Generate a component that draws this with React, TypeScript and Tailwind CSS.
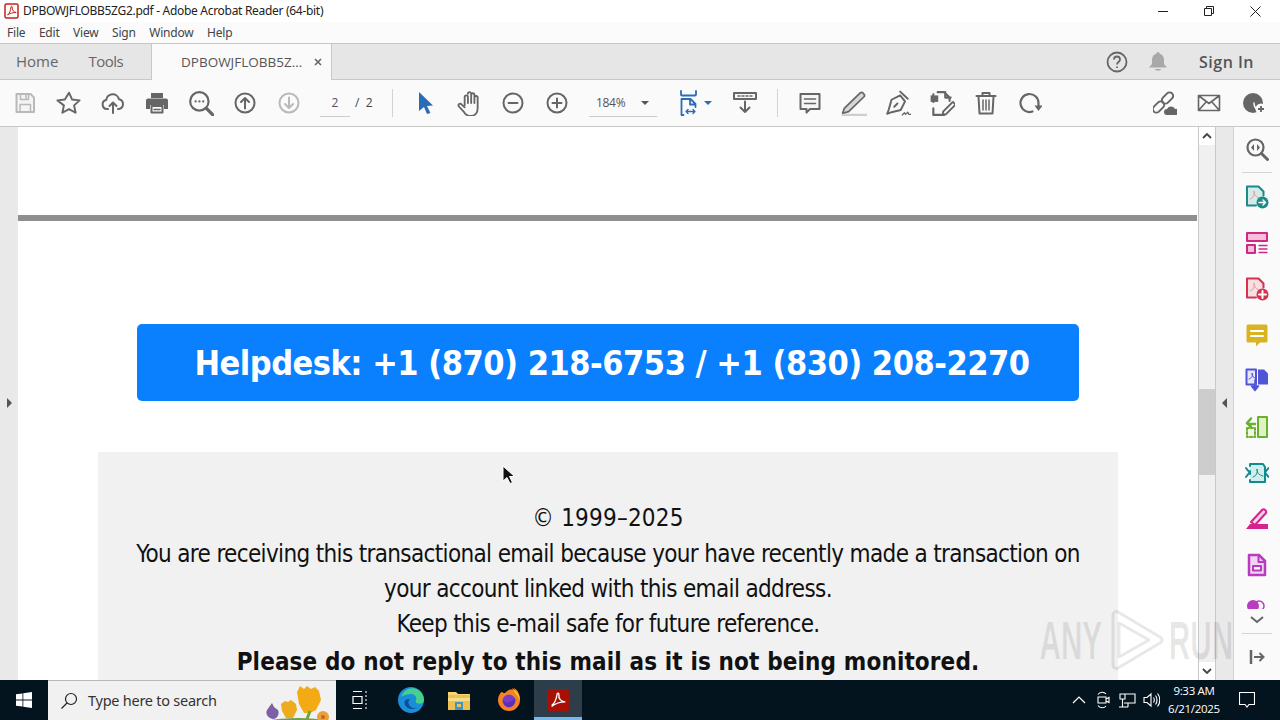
import type { ReactNode } from 'react';

const ui = 'font-["Open_Sans",sans-serif]';
const docFont = 'font-["DejaVu_Sans",sans-serif] font-stretch-condensed';

function Ico({ w = 24, h = 24, vb = '0 0 24 24', children }: { w?: number; h?: number; vb?: string; children: ReactNode }) {
  return (
    <svg width={w} height={h} viewBox={vb} fill="none" strokeLinecap="round" strokeLinejoin="round" className="shrink-0">
      {children}
    </svg>
  );
}

const G = '#666666';

function ToolBtn({ children, className = 'w-[44px]' }: { children: ReactNode; className?: string }) {
  return <div className={`flex h-full shrink-0 items-center justify-center ${className}`}>{children}</div>;
}

function CircleArrow({ color, down }: { color: string; down?: boolean }) {
  return (
    <Ico>
      <circle cx="12" cy="12" r="9.5" stroke={color} strokeWidth="2" />
      {down ? (
        <path d="M12 6.5v10M8 13l4 4 4-4" stroke={color} strokeWidth="2" />
      ) : (
        <path d="M12 17.5v-10M8 11l4-4 4 4" stroke={color} strokeWidth="2" />
      )}
    </Ico>
  );
}

function Toolbar() {
  return (
    <div className="flex h-[47px] shrink-0 items-center border-b border-[#c8c8c8] bg-[#fafafa] pl-[3px] pr-[5px]">
      <ToolBtn>
        <Ico>
          <path d="M3.5 3h14L21 6.5V21H3.5z" fill="#f4f4f4" stroke="#b9b9b9" strokeWidth="2" />
          <path d="M7.5 3.5v5h8v-5M7 20.500v-7h10.500v7M13 4.500v3" stroke="#b9b9b9" strokeWidth="1.500" />
        </Ico>
      </ToolBtn>
      <ToolBtn>
        <Ico w={26} h={26}>
          <path d="M12 2.500l2.900 6.300 6.900.8-5.100 4.600 1.400 6.800-6.100-3.400-6.100 3.400 1.400-6.800L1.300 9.600l6.900-.8z" stroke={G} strokeWidth="1.800" />
        </Ico>
      </ToolBtn>
      <ToolBtn>
        <Ico>
          <path d="M7 18H6a4.500 4.500 0 0 1-.8-8.900A6.500 6.500 0 0 1 18 8.200 5 5 0 0 1 18 18h-1" stroke={G} strokeWidth="2" />
          <path d="M12 22V11.500M8.500 15l3.500-3.500 3.500 3.500" stroke={G} strokeWidth="2" />
        </Ico>
      </ToolBtn>
      <ToolBtn className="w-[43px]">
        <Ico>
          <path d="M6 2h12v5H6z" fill={G} />
          <path d="M1 9.500a2 2 0 0 1 2-2h18a2 2 0 0 1 2 2V18h-4v-4H5v4H1z" fill={G} />
          <path d="M6.500 15h11v6.500h-11z" fill="#fafafa" stroke={G} strokeWidth="2" />
          <path d="M9 18.500h6" stroke={G} strokeWidth="1.500" />
        </Ico>
      </ToolBtn>
      <ToolBtn className="w-[45px]">
        <Ico w={26} h={26}>
          <circle cx="10.500" cy="10.500" r="8.500" stroke={G} strokeWidth="2" />
          <path d="M17 17l7 7" stroke={G} strokeWidth="3" />
          <path d="M7 10.500h.1M10.500 10.500h.1M14 10.500h.1" stroke={G} strokeWidth="2" />
        </Ico>
      </ToolBtn>
      <ToolBtn>
        <CircleArrow color={G} />
      </ToolBtn>
      <ToolBtn>
        <CircleArrow color="#b9b9b9" down />
      </ToolBtn>
      <div className="flex h-full w-[81px] shrink-0 items-center pl-[9px]">
        <div className="flex h-[28px] w-[30px] items-center justify-center border-b border-[#cccccc] text-[12px] text-[#555]">2</div>
        <span className="ml-[5px] whitespace-nowrap text-[12px] text-[#444]">/&nbsp;&nbsp;2</span>
      </div>
      <div className="mr-[10px] h-[28px] w-px bg-[#d4d4d4]" />
      <ToolBtn>
        <svg width="16" height="22" viewBox="0 0 16 22" className="ml-[2px]">
          <path d="M1 0l14 13.500-6 .5 3.500 7-3.500 1-3-7-5 4z" fill="#2a6cb5" />
        </svg>
      </ToolBtn>
      <ToolBtn>
        <Ico w={26} h={26}>
          <path d="M8 14V6.500a1.500 1.500 0 0 1 3 0V12m0-8.500a1.500 1.500 0 0 1 3 0V12m0-7.500a1.500 1.500 0 0 1 3 0V12m0-5a1.500 1.500 0 0 1 3 0v10c0 4-2.500 7-6.500 7-3 0-4.500-1-6-3.500L2.500 15a1.500 1.500 0 0 1 2.500-1.700L8 16" stroke={G} strokeWidth="1.700" />
        </Ico>
      </ToolBtn>
      <ToolBtn>
        <Ico>
          <circle cx="12" cy="12" r="9.500" stroke={G} strokeWidth="2" />
          <path d="M7.500 12h9" stroke={G} strokeWidth="2" />
        </Ico>
      </ToolBtn>
      <ToolBtn>
        <Ico>
          <circle cx="12" cy="12" r="9.500" stroke={G} strokeWidth="2" />
          <path d="M7.500 12h9M12 7.500v9" stroke={G} strokeWidth="2" />
        </Ico>
      </ToolBtn>
      <div className="ml-[10px] flex h-[28px] w-[68px] shrink-0 items-center border-b border-[#cccccc] pl-[7px]">
        <span className="text-[12px] tracking-[-0.3px] text-[#555]">184%</span>
        <span className="ml-[16px] h-0 w-0 border-x-[4px] border-t-[4px] border-x-transparent border-t-[#555]" />
      </div>
      <ToolBtn className="ml-[14px] w-[50px]">
        <Ico w={24} h={26} vb="0 0 24 26">
          <path d="M1 1v3.500a1 1 0 0 0 1 1h13a1 1 0 0 0 1-1V1" stroke="#2a6cb5" strokeWidth="1.800" />
          <path d="M1.500 25V9h9l5 5v3M1.500 25h2M10 9v5.500h5.500" stroke="#2a6cb5" strokeWidth="1.800" />
          <path d="M6 21.500h9M6 21.500l2-2M6 21.500l2 2M15 21.500l-2-2M15 21.500l-2 2" stroke="#2a6cb5" strokeWidth="1.300" />
        </Ico>
        <span className="h-0 w-0 border-x-[4px] border-t-[4px] border-x-transparent border-t-[#2a6cb5]" />
      </ToolBtn>
      <ToolBtn className="w-[48px]">
        <Ico>
          <path d="M1 2h22v6H1z" stroke={G} strokeWidth="2" />
          <path d="M5 5h2M9 5h2M13 5h2M17 5h2" stroke={G} strokeWidth="1.500" />
          <path d="M12 10.500V21M7.500 16.500L12 21l4.500-4.500" stroke={G} strokeWidth="2" />
        </Ico>
      </ToolBtn>
      <div className="ml-[8px] mr-[10px] h-[28px] w-px bg-[#d4d4d4]" />
      <ToolBtn>
        <Ico>
          <path d="M2.500 3h19v15H12l-3.500 3.500V18h-6z" fill="#f5f5f5" stroke={G} strokeWidth="2" />
          <path d="M6.500 8h11M6.500 12.500h11" stroke={G} strokeWidth="1.500" />
        </Ico>
      </ToolBtn>
      <ToolBtn>
        <Ico w={26} h={26}>
          <path d="M3 17L18 2.500c1.500-1 4.500 1.500 3.500 3.500L7 20l-5.500 1.500z" fill="#d6d6d6" stroke={G} strokeWidth="1.600" />
          <path d="M2 23.500h22" stroke="#cfcfcf" strokeWidth="3" />
        </Ico>
      </ToolBtn>
      <ToolBtn>
        <Ico w={26} h={26}>
          <path d="M14 5L6 9 3.500 18l-1.500 4 4-1.500 8.500-2 4-8z" stroke={G} strokeWidth="1.800" />
          <path d="M14 1.500l7 6.500M8.500 15.500l3-3" stroke={G} strokeWidth="1.800" />
          <path d="M16 23l2-2 1 1.500 2-2 1 2h2" stroke={G} strokeWidth="1.200" />
        </Ico>
      </ToolBtn>
      <ToolBtn>
        <Ico w={26} h={26}>
          <path d="M8 2h6l5 5v3M15 2v5h5M4 11V4M4 17v6h10" stroke={G} strokeWidth="2" />
          <path d="M1.500 5h7v6h-7z" fill={G} />
          <path d="M13 20l9-9 2.500 2.500-9 9H13z" stroke={G} strokeWidth="1.800" />
        </Ico>
      </ToolBtn>
      <ToolBtn>
        <Ico>
          <path d="M2.500 5h19M8.500 4.500V2h7v2.500M4.500 5.500l1 17h13l1-17" stroke={G} strokeWidth="2" />
          <path d="M9 9v10M12 9v10M15 9v10" stroke={G} strokeWidth="1.500" />
        </Ico>
      </ToolBtn>
      <ToolBtn>
        <Ico>
          <path d="M14.500 20.500A9 9 0 1 1 20.500 12v3" stroke={G} strokeWidth="2.200" />
          <path d="M16.500 14.500h8L20.500 20z" fill={G} />
        </Ico>
      </ToolBtn>
      <div className="flex-1" />
      <ToolBtn>
        <Ico>
          <rect x="-1" y="12.500" width="13" height="7" rx="3.500" transform="rotate(-45 5.500 16)" stroke={G} strokeWidth="2" />
          <rect x="8" y="3.500" width="13" height="7" rx="3.500" transform="rotate(-45 14.500 7)" stroke={G} strokeWidth="2" />
          <path d="M14 24a3 3 0 0 1 0-6 4.500 4.500 0 0 1 8 0 3 3 0 0 1 1.500 6z" fill={G} />
        </Ico>
      </ToolBtn>
      <ToolBtn>
        <Ico>
          <path d="M1.500 4.500h21v15h-21zM1.500 4.500l10.500 8 10.500-8M1.500 19.500l8-9M22.500 19.500l-8-9" stroke={G} strokeWidth="1.600" />
        </Ico>
      </ToolBtn>
      <ToolBtn>
        <Ico>
          <circle cx="12" cy="12" r="10" fill={G} />
          <circle cx="20" cy="18" r="5.500" fill="#fafafa" />
          <path d="M13 12c0 3 1 5 3.500 7" stroke="#fafafa" strokeWidth="1.500" />
          <path d="M20 15v6M17 18h6" stroke={G} strokeWidth="1.800" strokeLinecap="butt" />
        </Ico>
      </ToolBtn>
    </div>
  );
}

function Sidebar() {
  return (
    <div className="flex w-[46px] shrink-0 flex-col items-center bg-[#fafafa]">
      <div className="mt-[10px] flex h-[24px] items-center">
        <Ico>
          <circle cx="10.500" cy="10.500" r="8" stroke={G} strokeWidth="2.200" />
          <path d="M16.500 16.500l6 6" stroke={G} strokeWidth="3" />
          <path d="M9 7l-3 3.500L9 14zM12 7l3 3.500-3 3.500z" fill={G} />
        </Ico>
      </div>
      <div className="mt-[11px] h-px w-[30px] bg-[#d4d4d4]" />
      <div className="mt-[12px]">
        <Ico>
          <path d="M2 1.500h11.500l5 5V12H13v8.500H2z" fill="#d3ecea" />
          <path d="M11 20.500H2v-19h11.500l5 5v4" stroke="#1c8a87" strokeWidth="2" />
          <path d="M5 14c3-1 5-4 4-8 0 4 2 6 6 7" stroke="#e29a9a" strokeWidth="1" />
          <circle cx="17.500" cy="17.500" r="6" fill="#1c8a87" />
          <path d="M14 17.500h6M18 15l2.500 2.500-2.500 2.500" stroke="#fff" strokeWidth="1.500" />
        </Ico>
      </div>
      <div className="mt-[22px]">
        <Ico>
          <path d="M2 2h20v8H2z" fill="#f5bfdc" stroke="#cf2a83" strokeWidth="2" />
          <path d="M2 14h8v8H2z" fill="#f5bfdc" stroke="#cf2a83" strokeWidth="2" />
          <path d="M14 14.500h8M14 18h8M14 21.500h8" stroke="#cf2a83" strokeWidth="1.300" />
        </Ico>
      </div>
      <div className="mt-[22px]">
        <Ico>
          <path d="M2 1.500h11.500l5 5V12H13v8.500H2z" fill="#f8dfe2" />
          <path d="M11 20.500H2v-19h11.500l5 5v4" stroke="#d6304d" strokeWidth="2" />
          <path d="M5 14c3-1 5-4 4-8 0 4 2 6 6 7" stroke="#e29a9a" strokeWidth="1" />
          <circle cx="17.500" cy="17.500" r="6" fill="#d6304d" />
          <path d="M14 17.500h7M17.500 14v7" stroke="#fff" strokeWidth="2" />
        </Ico>
      </div>
      <div className="mt-[22px]">
        <Ico>
          <path d="M3 1.500h18a1.500 1.500 0 0 1 1.500 1.500v15a1.500 1.500 0 0 1-1.500 1.500h-6L11 23.500V19.500H3A1.500 1.500 0 0 1 1.500 18V3A1.500 1.500 0 0 1 3 1.500z" fill="#d9b321" />
          <path d="M6 8h12M6 13h12" stroke="#fff" strokeWidth="2" />
        </Ico>
      </div>
      <div className="mt-[21px]">
        <Ico>
          <path d="M1.500 1.500H11v15H1.500z" fill="#e6e6fa" stroke="#5054d8" strokeWidth="2" />
          <path d="M13 1.500h6l4 4v11H13z" fill="#5054d8" />
          <path d="M10 12v7M6.500 18h7l-3.500 4.500z" fill="#5054d8" stroke="#5054d8" strokeWidth="1.500" />
          <path d="M4 11c3-1 4-3 3-6 0 3 1 5 4 5" stroke="#5054d8" strokeWidth="1" />
        </Ico>
      </div>
      <div className="mt-[23px]">
        <Ico>
          <path d="M13 2h9v20h-9z" fill="#dff2c4" stroke="#68b02e" strokeWidth="2" />
          <path d="M2 13h8v9H2z" fill="#eef8df" stroke="#68b02e" strokeWidth="2" strokeDasharray="2 2" />
          <path d="M10 9H3M6 3.500L2 8l4 4" stroke="#68b02e" strokeWidth="2.500" />
        </Ico>
      </div>
      <div className="mt-[22px]">
        <Ico>
          <path d="M5 5V3h13l2 3v15H5v-2M5 13v-3" fill="#d3ecec" stroke="#0f8c8f" strokeWidth="2" />
          <path d="M1 7l3.500 4.500L1 16M23.500 7L20 11.500l3.500 4.500" stroke="#0f8c8f" strokeWidth="2" />
          <path d="M8 16c3-1 5-4 4-8 0 4 2 6 6 7" stroke="#0f8c8f" strokeWidth="1" />
        </Ico>
      </div>
      <div className="mt-[22px]">
        <Ico>
          <path d="M6 15L17.500 2.500c1.500-1 4.500 1 3.500 3.500L10 18z" fill="#f7cfe6" stroke="#d6228c" strokeWidth="2" />
          <path d="M1 22l4-5h18v5z" fill="#d6228c" />
        </Ico>
      </div>
      <div className="mt-[22px]">
        <Ico>
          <path d="M4 2h10l6 6v14H4z" fill="#f0d4f2" stroke="#b83cc0" strokeWidth="2.500" />
          <path d="M13.500 2v7H20" stroke="#b83cc0" strokeWidth="2" />
          <path d="M8 13h8v4.500H8z" fill="#fff" stroke="#b83cc0" strokeWidth="2" />
        </Ico>
      </div>
      <div className="mt-[23px] flex h-[9px] items-start overflow-hidden">
        <svg width="20" height="12" viewBox="0 0 20 12">
          <circle cx="6" cy="6" r="6" fill="#b83cc0" />
          <circle cx="12" cy="6" r="5" fill="none" stroke="#b83cc0" strokeWidth="1.500" />
        </svg>
      </div>
      <svg width="16" height="10" viewBox="0 0 16 10" className="mt-[6px]">
        <path d="M2 2l6 5 6-5" fill="none" stroke={G} strokeWidth="2" />
      </svg>
      <div className="mt-[8px] h-px w-[30px] bg-[#d4d4d4]" />
      <div className="mt-[15px]">
        <svg width="16" height="16" viewBox="0 0 16 16" fill="none">
          <path d="M2 1v14" stroke={G} strokeWidth="2.500" />
          <path d="M5 8h9M10.500 4l4 4-4 4" stroke={G} strokeWidth="2" />
        </svg>
      </div>
    </div>
  );
}

function Taskbar() {
  return (
    <div className={`flex h-[40px] shrink-0 items-center bg-[#04141f] text-white ${ui}`}>
      <div className="flex h-full w-[48px] items-center justify-center">
        <svg width="16" height="16" viewBox="0 0 16 16" fill="#fff">
          <path d="M0 2.300l6.500-.9v6.200H0zM7.300 1.300L16 0v7.600H7.300zM0 8.400h6.500v6.200L0 13.700zM7.300 8.400H16V16l-8.700-1.300z" />
        </svg>
      </div>
      <div className="relative flex h-full w-[288px] items-center overflow-hidden border-t border-[#b8b8b8] bg-[#f1f1f1] pl-[12px]">
        <svg width="18" height="18" viewBox="0 0 18 18" fill="none" stroke="#222" strokeWidth="1.200">
          <circle cx="11" cy="7" r="5.500" />
          <path d="M7 11l-5.500 5.500" />
        </svg>
        <span className="ml-[10px] font-['Noto_Sans',sans-serif] text-[14.500px] tracking-[-0.25px] text-[#333]">Type here to search</span>
        <svg width="80" height="40" viewBox="0 0 80 40" className="absolute right-0 top-0">
          <ellipse cx="42" cy="46" rx="42" ry="9" fill="#71a04b" />
          <path d="M17 38c-5-1-8-5-6-9l5-7 2 4 4 3c2 4-1 9-5 9z" fill="#7d5fa8" />
          <path d="M25 23l4-3 3 1 3-2 5 4 1 6-4 8h-7l-4-7z" fill="#efab1e" />
          <path d="M41 11l3-6 4 3 3-3 4 3 4-2 4 4 2 9-5 10-6 3h-6l-5-9z" fill="#f3aa14" />
          <path d="M54 30l-3 8" stroke="#6da73c" strokeWidth="3" />
          <circle cx="67" cy="36" r="6" fill="#e9a13a" />
          <circle cx="67" cy="36" r="2" fill="#c5671c" />
        </svg>
      </div>
      <div className="flex h-full w-[48px] items-center justify-center">
        <svg width="16" height="18" viewBox="0 0 16 18" fill="none" stroke="#fff" strokeWidth="1.200">
          <path d="M1 .5h9M1 17.500h9M1 5.500h9v7H1z" />
          <path d="M13 1h2M13 5h2M13 9h2M13 13h2M13 17h2" />
        </svg>
      </div>
      <div className="ml-[3px] flex h-full w-[48px] items-center justify-center">
        <svg width="26" height="26" viewBox="0 0 24 24">
          <circle cx="12" cy="12" r="12" fill="#1a8ed8" />
          <path d="M3 9C5 3 11 0 16 1.500c5 1.500 8 6 8 10.500 0 3-3 4-6 3-3-1-1-3-1-4 0-3-3-5-6-4.500C7 7 4 8 3 9z" fill="#46d08c" />
          <path d="M6 14c0 4 4 7 8 6 2 0 3-1 3-1-3 1-6 0-7-3-1-2 0-4 1-5-3 0-5 1-5 3z" fill="#0c4f96" />
        </svg>
      </div>
      <div className="flex h-full w-[48px] items-center justify-center">
        <svg width="24" height="22" viewBox="0 0 24 22">
          <path d="M1 3h8l2 2h12v3H1z" fill="#f7d774" />
          <path d="M1 6h22v15H1z" fill="#eec04f" />
          <path d="M1 9h22v3H1z" fill="#f7dd88" />
          <path d="M8 13h8v8H8z" fill="#3d97c9" />
          <path d="M10 15h4v3h-4z" fill="#eec04f" />
        </svg>
      </div>
      <div className="ml-[2px] flex h-full w-[48px] items-center justify-center">
        <svg width="24" height="24" viewBox="0 0 24 24">
          <path d="M12 2c2-1 5 0 6 1l-1-3c4 2 6 7 6 12a11 11 0 0 1-22 0c0-3 1-5 2-6 0-1 1-2 2-2 1 1 2 1 3 1 1-1 2-2 4-3z" fill="#f58322" />
          <path d="M15 0c3 2 8 6 8 12-3-5-6-8-8-12z" fill="#f9c22b" />
          <circle cx="12" cy="13" r="6.500" fill="#7b3dc9" />
          <path d="M6 12c2 3 7 4 12-2 1 4-2 9-6 9-3 0-6-3-6-7z" fill="#5b2fb0" />
        </svg>
      </div>
      <div className="ml-[1px] flex h-full w-[48px] items-center justify-center border-b-[3px] border-[#76b9ed] bg-[#2d3e4a] pt-[3px]">
        <svg width="22" height="22" viewBox="0 0 24 24">
          <rect width="24" height="24" rx="2" fill="#a81005" />
          <path d="M5 18c3-2 5-6 6-12 0-2 2-2 2 0-1 5 3 8 7 8-5 0-10 1-15 5" fill="none" stroke="#fff" strokeWidth="1.500" />
        </svg>
      </div>
      <div className="flex-1" />
      <div className="flex items-center pr-[11px]">
        <div className="flex w-[24px] justify-center">
          <svg width="14" height="8" viewBox="0 0 14 8" fill="none" stroke="#fff" strokeWidth="1.200">
            <path d="M1 7l6-6 6 6" />
          </svg>
        </div>
        <div className="flex w-[24px] justify-center">
          <svg width="14" height="18" viewBox="0 0 14 18" fill="none" stroke="#fff" strokeWidth="1.100">
            <path d="M2 3.500C4 .5 8 .5 10 3M2 14.500c2 3 6 3 8 .5" />
            <path d="M2 6h8v6H2zM10 8l3-1.500v5L10 10z" />
          </svg>
        </div>
        <div className="flex w-[24px] justify-center">
          <svg width="17" height="15" viewBox="0 0 17 15" fill="none" stroke="#fff" strokeWidth="1.100">
            <path d="M5 1h11v9H5M1 1h5v5H1zM3.500 6v6M0 14h9M3.500 12v2M9 10v4" />
          </svg>
        </div>
        <div className="flex w-[24px] justify-center">
          <svg width="17" height="16" viewBox="0 0 17 16" fill="none" stroke="#fff" strokeWidth="1.100">
            <path d="M1 5.500h3L8 2v12l-4-3.500H1zM10.500 5.500c1 1.500 1 3.500 0 5M12.500 3.500c2 2.500 2 6.500 0 9M14.500 1.500c3 3.500 3 9.500 0 13" />
          </svg>
        </div>
        <div className="flex w-[62px] flex-col items-center text-[11.500px] leading-[18px] tracking-[-0.3px] whitespace-nowrap">
          <span>9:33 AM</span>
          <span>6/21/2025</span>
        </div>
        <div className="flex w-[44px] justify-center">
          <svg width="16" height="16" viewBox="0 0 16 16" fill="none" stroke="#fff" strokeWidth="1.100">
            <path d="M.5 .5h15v12H10L8 15l-2-2.500H.5z" />
          </svg>
        </div>
      </div>
    </div>
  );
}

function Watermark() {
  return (
    <div className="pointer-events-none absolute left-[1021px] top-[608px] flex h-[64px] items-center text-black/[0.09]">
      <span className="w-[84px] origin-center scale-x-[0.56] text-center font-['Liberation_Sans',sans-serif] text-[53px] font-bold leading-none">ANY</span>
      <svg width="62" height="62" viewBox="0 0 62 62" fill="none" stroke="currentColor" strokeWidth="3" strokeLinejoin="round">
        <path d="M8 6v50M8 6c0-3 3-4 5-3l42 25c3 2 3 4 0 6L13 59c-2 1-5 0-5-3M14 14l30 17-30 17z" />
      </svg>
      <span className="-ml-[14px] w-[72px] origin-center scale-x-[0.56] text-center font-['Liberation_Sans',sans-serif] text-[53px] font-bold leading-none">RUN</span>
    </div>
  );
}

export default function App() {
  return (
    <div className={`relative flex h-[720px] w-[1280px] flex-col overflow-hidden bg-white ${ui}`}>
      {/* title bar */}
      <div className="flex h-[22px] shrink-0 items-center bg-white pl-[4px]">
        <svg width="15" height="16" viewBox="0 0 15 16" fill="none">
          <rect x="1" y="1" width="13" height="14" rx="1.500" fill="#fff" stroke="#c8211a" strokeWidth="1.500" />
          <path d="M3.500 12c2-1.500 3-4 3.500-8 .3-1 1.200-1 1.200 0-.2 3.500 1.500 5 4 5.500-3 0-6 .5-8.700 2.500z" stroke="#c8211a" strokeWidth="1" />
        </svg>
        <span className="ml-[4px] font-['Noto_Sans',sans-serif] text-[12px] tracking-[-0.3px] text-[#222]">DPBOWJFLOBB5ZG2.pdf - Adobe Acrobat Reader (64-bit)</span>
        <div className="ml-auto flex h-full items-center pr-[2px] text-[#222]">
          <div className="flex w-[46px] justify-center">
            <div className="h-px w-[10px] bg-[#222]" />
          </div>
          <div className="flex w-[46px] justify-center">
            <svg width="10" height="10" viewBox="0 0 10 10" fill="none" stroke="#222" strokeWidth="1">
              <path d="M.5 2.500h7v7h-7zM2.500 2.500v-2h7v7h-2" />
            </svg>
          </div>
          <div className="flex w-[46px] justify-center">
            <svg width="11" height="11" viewBox="0 0 11 11" fill="none" stroke="#222" strokeWidth="1">
              <path d="M.5 .5l10 10M10.500 .5l-10 10" />
            </svg>
          </div>
        </div>
      </div>

      {/* menu */}
      <div className="flex h-[21px] shrink-0 items-center gap-[13.500px] bg-[#fbfbfb] pl-[7px] font-['Noto_Sans',sans-serif] text-[12px] tracking-[-0.2px] text-[#444]">
        <span>File</span>
        <span>Edit</span>
        <span>View</span>
        <span>Sign</span>
        <span>Window</span>
        <span>Help</span>
      </div>

      {/* tabs */}
      <div className="flex h-[37px] shrink-0 border-y border-[#c8c8c8] bg-[#e6e6e6]">
        <div className="flex w-[151px] items-center gap-[30px] pl-[16px] text-[15px] text-[#666]">
          <span>Home</span>
          <span className="tracking-[-0.5px]">Tools</span>
        </div>
        <div className="-mb-px flex w-[181px] items-center border-x border-[#c8c8c8] bg-[#fafafa] pl-[29px] text-[13.500px] text-[#555]">
          <span>DPBOWJFLOBB5Z...</span>
          <svg width="8" height="8" viewBox="0 0 8 8" stroke="#666" strokeWidth="1.600" className="ml-[12px]">
            <path d="M1 1l6 6M7 1l-6 6" />
          </svg>
        </div>
        <div className="flex flex-1 items-center justify-end pr-[26px]">
          <svg width="22" height="22" viewBox="0 0 22 22" fill="none" stroke="#666" strokeWidth="1.800">
            <circle cx="11" cy="11" r="9.500" />
            <path d="M8 8.500c0-4 6-4 6 0 0 2.500-3 2.500-3 5M11 15.500v1.500" />
          </svg>
          <svg width="18" height="20" viewBox="0 0 18 20" fill="#a8a8a8" className="ml-[21px]">
            <path d="M9 0c1 0 1.500 1 1.500 1.500C13.500 2.500 15 5 15 8v4l3 3.500H0L3 12V8c0-3 1.500-5.500 4.500-6.500C7.500 1 8 0 9 0zM6 17h6c0 2-6 2-6 0z" />
          </svg>
          <span className="ml-[32px] text-[16px] font-semibold tracking-[0.5px] text-[#555]">Sign In</span>
        </div>
      </div>

      <Toolbar />

      {/* main area */}
      <div className="flex min-h-0 flex-1">
        <div className="flex w-[18px] shrink-0 items-center justify-center bg-[#e9e9e9] pb-[1px]">
          <span className="h-0 w-0 border-y-[5px] border-l-[5px] border-y-transparent border-l-[#555]" />
        </div>

        <div className="min-w-0 flex-1 overflow-hidden bg-white">
          <div className="mr-[1px] mt-[88px] h-[6px] bg-[#8f8f8f]" />
          <div className="mx-[119px] mt-[103px] flex h-[77px] w-[942px] items-center justify-center rounded-[5px] bg-[#0a80ff] pl-[8px] pt-[2px]">
            <span className={`text-[34px] font-bold tracking-[-0.5px] text-white ${docFont}`}>Helpdesk: +1 (870) 218-6753 / +1 (830) 208-2270</span>
          </div>
          <div className={`relative mx-[80px] mt-[51px] h-[300px] w-[1020px] bg-[#f1f1f1] pt-[49px] text-center text-[24px] leading-[35px] tracking-[-0.65px] text-[#111] ${docFont}`}>
            <p className="tracking-[0.2px]">© 1999–2025</p>
            <p className="mt-[1px]">You are receiving this transactional email because your have recently made a transaction on</p>
            <p>your account linked with this email address.</p>
            <p>Keep this e-mail safe for future reference.</p>
            <p className="mt-[3px] font-bold tracking-[0.13px]">Please do not reply to this mail as it is not being monitored.</p>
            <svg width="14" height="20" viewBox="0 0 14 20" className="absolute left-[404px] top-[13px]">
              <path d="M1 1v15l4-3.500 3 6 2.500-1-3-6H12.500z" fill="#111" stroke="#fff" strokeWidth="1" />
            </svg>
          </div>
        </div>

        {/* scrollbar */}
        <div className="flex w-[18px] shrink-0 flex-col items-center border-x border-[#c8c8c8] bg-[#f0f0f0]">
          <div className="flex h-[18px] w-full items-center justify-center bg-white">
            <svg width="10" height="6" viewBox="0 0 10 6" fill="none" stroke="#444" strokeWidth="1.800">
              <path d="M1 5l4-4 4 4" />
            </svg>
          </div>
          <div className="mt-[244px] h-[86px] w-full bg-[#cdcdcd]" />
          <div className="flex-1" />
          <div className="flex h-[18px] w-full items-center justify-center bg-white">
            <svg width="10" height="6" viewBox="0 0 10 6" fill="none" stroke="#444" strokeWidth="1.800">
              <path d="M1 1l4 4 4-4" />
            </svg>
          </div>
        </div>
        <div className="flex w-[18px] shrink-0 items-center justify-center border-r border-[#d4d4d4] bg-[#e9e9e9] pb-[1px]">
          <span className="h-0 w-0 border-y-[5px] border-r-[5px] border-y-transparent border-r-[#555]" />
        </div>

        <Sidebar />
      </div>

      <Taskbar />
      <Watermark />
    </div>
  );
}
